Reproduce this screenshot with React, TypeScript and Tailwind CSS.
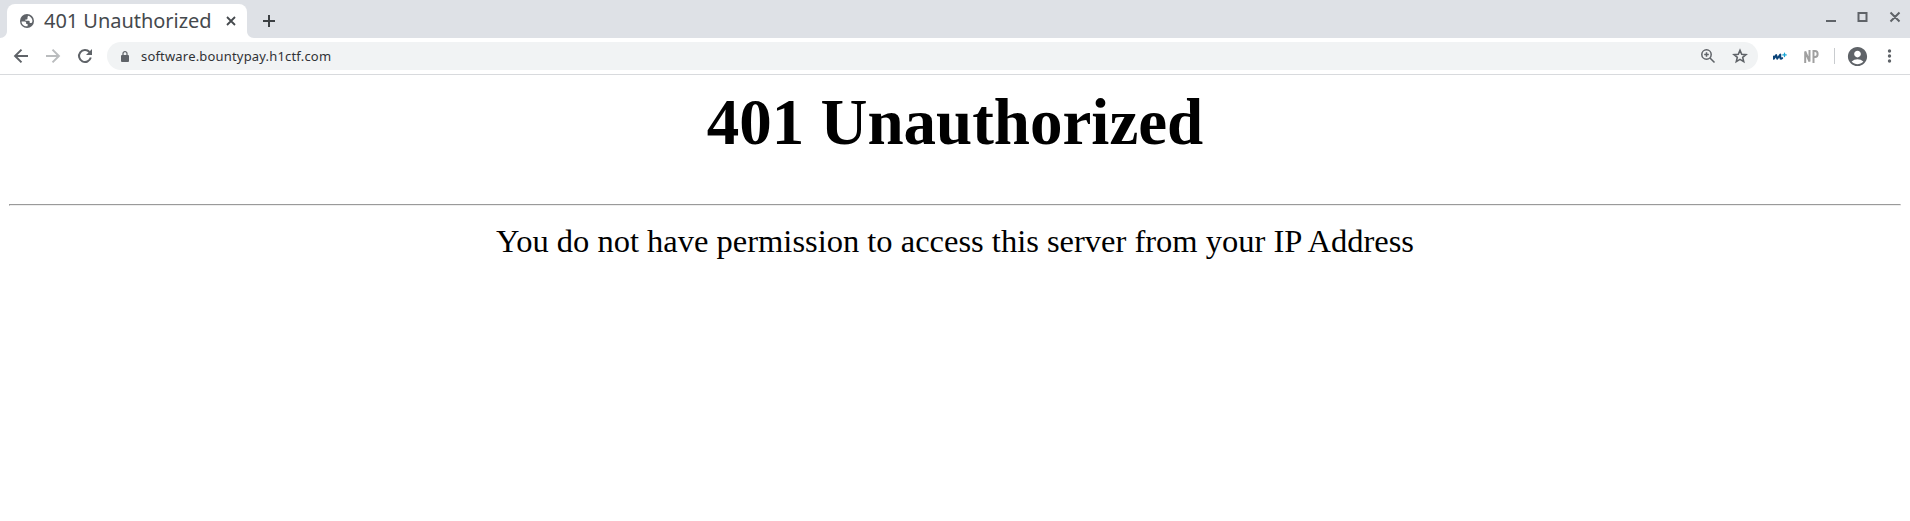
import type { ReactNode } from "react";
import { MdAccountCircle } from "react-icons/md";

function Glyph({ className, width = 2, children }: { className: string; width?: number; children: ReactNode }) {
  return (
    <svg className={className} viewBox="0 0 20 20" fill="none" stroke="currentColor" strokeWidth={width}>
      {children}
    </svg>
  );
}

function TabStrip() {
  return (
    <div className="flex h-[38px] items-end bg-[#dee1e6]">
      <svg className="h-[7px] w-[7px] text-white" viewBox="0 0 7 7" fill="currentColor">
        <path d="M7 0v7H0c4 0 7-3 7-7z" />
      </svg>
      <div className="flex h-[34px] w-[240px] items-center rounded-t-[8px] bg-white pl-[13px] text-[#5f6368]">
        <svg className="h-[14px] w-[14px] shrink-0" viewBox="0 0 14 14">
          <circle cx="7" cy="7" r="7" fill="#5f6368" />
          <path
            d="M1.500 7.600h3.200c.9 0 1.500.7 1.500 1.500v.9h1.400v2.300C4.200 12.700 1.600 10.600 1.500 7.600zM8 1.800c2.300.5 4.100 2.400 4.400 4.800.1 1.100-.3 2-.9 2.400H9.700V7.900c0-.6-.5-1.100-1.100-1.100H5.400V5.400h1.200c.6 0 .9-.5.9-1V3.400z"
            fill="#fff"
          />
        </svg>
        <span className="ml-[10px] w-[170px] whitespace-nowrap text-[20px] leading-[28px] tracking-[-0.04px] text-[#45494d]">
          401 Unauthorized
        </span>
        <Glyph className="ml-[7px] h-[20px] w-[20px] shrink-0 text-[#45494d]" width={1.8}>
          <path d="M6 6l8 8M14 6l-8 8" />
        </Glyph>
      </div>
      <svg className="h-[7px] w-[7px] text-white" viewBox="0 0 7 7" fill="currentColor">
        <path d="M0 0v7h7C3 7 0 4 0 0z" />
      </svg>
      <Glyph className="mb-[7px] ml-[5px] h-[20px] w-[20px] text-[#3c4043]">
        <path d="M10 4v12M4 10h12" />
      </Glyph>
      <svg className="mr-[9px] mb-[15px] ml-auto h-[12px] w-[76px]" viewBox="0 0 76 12" fill="none" stroke="#5f6368" strokeWidth="2">
        <path d="M1 10h10M33.500 2h8v8h-8zM65.500 1.500l9 9M74.500 1.500l-9 9" />
      </svg>
    </div>
  );
}

function Toolbar() {
  return (
    <div className="flex h-[37px] items-center border-b border-[#d8dadd] bg-white text-[#5f6368]">
      <Glyph className="ml-[11px] h-[20px] w-[20px]">
        <path d="M17 10H4.500M10.500 3.600L4.100 10l6.400 6.400" />
      </Glyph>
      <Glyph className="ml-[12px] h-[20px] w-[20px] text-[#babcbe]">
        <path d="M3 10h12.500M9.500 3.600l6.400 6.400-6.400 6.400" />
      </Glyph>
      <Glyph className="ml-[12px] h-[20px] w-[20px]">
        <path d="M14.500 6A6 6 0 1 0 15.800 11.600" />
        <path d="M17 3v6h-6z" fill="currentColor" stroke="none" />
      </Glyph>
      <div className="ml-[12px] flex h-[28px] w-[1651px] items-center rounded-full bg-[#f1f3f4] pl-[14px]">
        <svg className="h-[11px] w-[8px]" viewBox="0 0 8 11">
          <rect y="4" width="8" height="7" rx="1" fill="#5f6368" />
          <path d="M2 4.500V2.600a2 2 0 0 1 4 0v1.900" fill="none" stroke="#5f6368" strokeWidth="1.200" />
        </svg>
        <span className="ml-[12px] whitespace-nowrap text-[13px] leading-[18px] tracking-[0.18px] text-[#303236]">
          software.bountypay.h1ctf.com
        </span>
        <Glyph className="ml-auto h-[20px] w-[20px]" width={1.5}>
          <circle cx="8.500" cy="8.500" r="4.700" />
          <path d="M12 12l4.500 4.500M8.500 6.200v4.600M6.200 8.500h4.600" />
        </Glyph>
        <Glyph className="mr-[8px] ml-[12px] h-[20px] w-[20px]" width={1.6}>
          <path d="M10 4.200l1.700 4 4.300.4-3.300 2.800 1 4.200L10 13.400l-3.700 2.200 1-4.200L4 8.600l4.300-.4z" />
        </Glyph>
      </div>
      <svg className="ml-[15px] h-[9px] w-[14px]" viewBox="0 0 14 9" fill="none" strokeLinecap="round" strokeLinejoin="round">
        <path d="M.9 4.500v2.300L3.200 3l1 3.800L7.300 2.600v3.200c0 1.500 1 1.300 1.900.3" stroke="#0b4479" strokeWidth="1.900" />
        <path d="M11.500 1.200v3.400M9.800 2.900h3.400" stroke="#16a5d5" strokeWidth="1.300" />
      </svg>
      <svg className="ml-[17px] h-[13px] w-[15px]" viewBox="0 0 15 13" fill="none" stroke="#a0a0a0" strokeWidth="2">
        <path d="M1.200 13V1.500l4.300 10V0M9.500 13V1h1.500c3.500 0 3.500 6 0 6H9.500" />
      </svg>
      <div className="ml-[15px] h-[16px] w-px bg-[#c9cccf]" />
      <MdAccountCircle className="ml-[11px] h-[23px] w-[23px]" />
      <svg className="ml-[11px] h-[20px] w-[20px]" viewBox="0 0 20 20" fill="currentColor">
        <circle cx="9.500" cy="5" r="1.700" />
        <circle cx="9.500" cy="10" r="1.700" />
        <circle cx="9.500" cy="15" r="1.700" />
      </svg>
    </div>
  );
}

export default function App() {
  return (
    <div className="flex h-[521px] w-[1910px] flex-col overflow-hidden bg-white font-['Noto_Sans',sans-serif]">
      <TabStrip />
      <Toolbar />
      <main className="flex-1 px-[9px] pt-[10px] text-center font-['Liberation_Serif',serif] text-black">
        <h1 className="text-[65px] leading-[75px] font-bold">401 Unauthorized</h1>
        <hr className="mt-[44px] h-[2px] border border-t-[#9a9a9a] border-r-[#eeeeee] border-b-[#eeeeee] border-l-[#9a9a9a]" />
        <p className="mt-[17px] text-[32.5px] leading-[37px]">
          You do not have permission to access this server from your IP Address
        </p>
      </main>
    </div>
  );
}
